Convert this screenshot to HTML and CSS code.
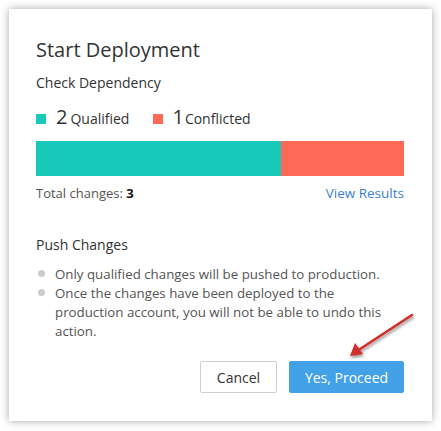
FILE: index.html
```html
<!DOCTYPE html>
<html>
<head>
<meta charset="utf-8">
<link rel="stylesheet" href="styles.css">
</head>
<body>
<div class="card">
  <h1 class="title">Start Deployment</h1>
  <h2 class="subtitle">Check Dependency</h2>
  <div class="legend">
    <span class="legend-item"><span class="swatch teal"></span><span class="num">2</span>Qualified</span>
    <span class="legend-item"><span class="swatch red"></span><span class="num">1</span>Conflicted</span>
  </div>
  <div class="bar">
    <div class="seg teal" style="width:66.7%"></div>
    <div class="seg red" style="width:33.3%"></div>
  </div>
  <div class="totals">
    <span class="total">Total changes: <b>3</b></span>
    <a class="link">View Results</a>
  </div>
  <h2 class="subtitle push">Push Changes</h2>
  <ul class="notes">
    <li>Only qualified changes will be pushed to production.</li>
    <li>Once the changes have been deployed to the production account, you will not be able to undo this action.</li>
  </ul>
  <div class="actions">
    <button class="btn btn-cancel">Cancel</button>
    <button class="btn btn-primary">Yes, Proceed</button>
  </div>
  <svg class="arrow" width="80" height="60" viewBox="0 0 80 60">
    <defs>
      <filter id="sh" x="-30%" y="-30%" width="160%" height="160%">
        <feDropShadow dx="1" dy="2" stdDeviation="1.5" flood-color="#000" flood-opacity="0.45"/>
      </filter>
    </defs>
    <g filter="url(#sh)">
      <line x1="71" y1="6" x2="16" y2="42" stroke="#cf2f2a" stroke-width="2.6" stroke-linecap="round"/>
      <polygon points="9,47 14,34 22,45" fill="#cf2f2a"/>
    </g>
  </svg>
</div>
</body>
</html>
```

FILE: styles.css
```css
html, body {
  margin: 0;
  padding: 0;
  background: #ffffff;
}
body {
  font-family: "Open Sans", "Liberation Sans", sans-serif;
  color: #333;
}
.card {
  position: relative;
  margin: 9px;
  width: 423px;
  height: 412px;
  box-sizing: border-box;
  padding: 28px 28px 0 27px;
  background: #fff;
  box-shadow: 0 0 8px rgba(0, 0, 0, 0.35);
}
.title {
  margin: 0;
  font-size: 20px;
  line-height: 26px;
  font-weight: 400;
  color: #333;
}
.subtitle {
  margin: 10px 0 0;
  font-size: 14px;
  line-height: 20px;
  font-weight: 400;
  color: #333;
}
.legend {
  display: flex;
  gap: 24px;
  margin-top: 14px;
  height: 24px;
  align-items: flex-end;
}
.legend-item {
  display: flex;
  align-items: baseline;
  font-size: 14px;
  line-height: 24px;
  color: #333;
}
.swatch {
  display: inline-block;
  width: 10px;
  height: 10px;
  margin-right: 10px;
}
.num {
  font-size: 20px;
  margin-right: 3px;
}
.red + .num {
  margin-left: -1px;
  margin-right: 1px;
}
.teal { background: #17c9b8; }
.red { background: #ff6a58; }
.bar {
  display: flex;
  margin-top: 10px;
  height: 35px;
}
.seg { height: 100%; }
.totals {
  display: flex;
  justify-content: space-between;
  margin-top: 8px;
  font-size: 13px;
  line-height: 18px;
}
.total { color: #555; }
.total b { color: #111; }
.link { color: #3a7fd5; font-size: 13.5px; }
.push {
  margin-top: 33px;
}
.notes {
  list-style: none;
  margin: 10px 0 0;
  padding: 0;
  font-size: 13.3px;
  line-height: 19px;
  color: #555;
}
.notes li {
  position: relative;
  padding-left: 19px;
}
.notes li::before {
  content: "";
  position: absolute;
  left: 2px;
  top: 5px;
  width: 7px;
  height: 7px;
  border-radius: 50%;
  background: #cccccc;
}
.actions {
  display: flex;
  justify-content: flex-end;
  gap: 12px;
  margin-top: 20px;
}
.btn {
  height: 32px;
  font-family: inherit;
  font-size: 14px;
  border-radius: 2px;
  padding: 0;
  cursor: pointer;
}
.btn-cancel {
  width: 77px;
  background: #fff;
  border: 1px solid #cfcfcf;
  color: #333;
}
.btn-primary {
  width: 115px;
  background: #43a1e8;
  border: 1px solid #43a1e8;
  color: #fff;
}
.arrow {
  position: absolute;
  left: 332px;
  top: 300px;
}
```
